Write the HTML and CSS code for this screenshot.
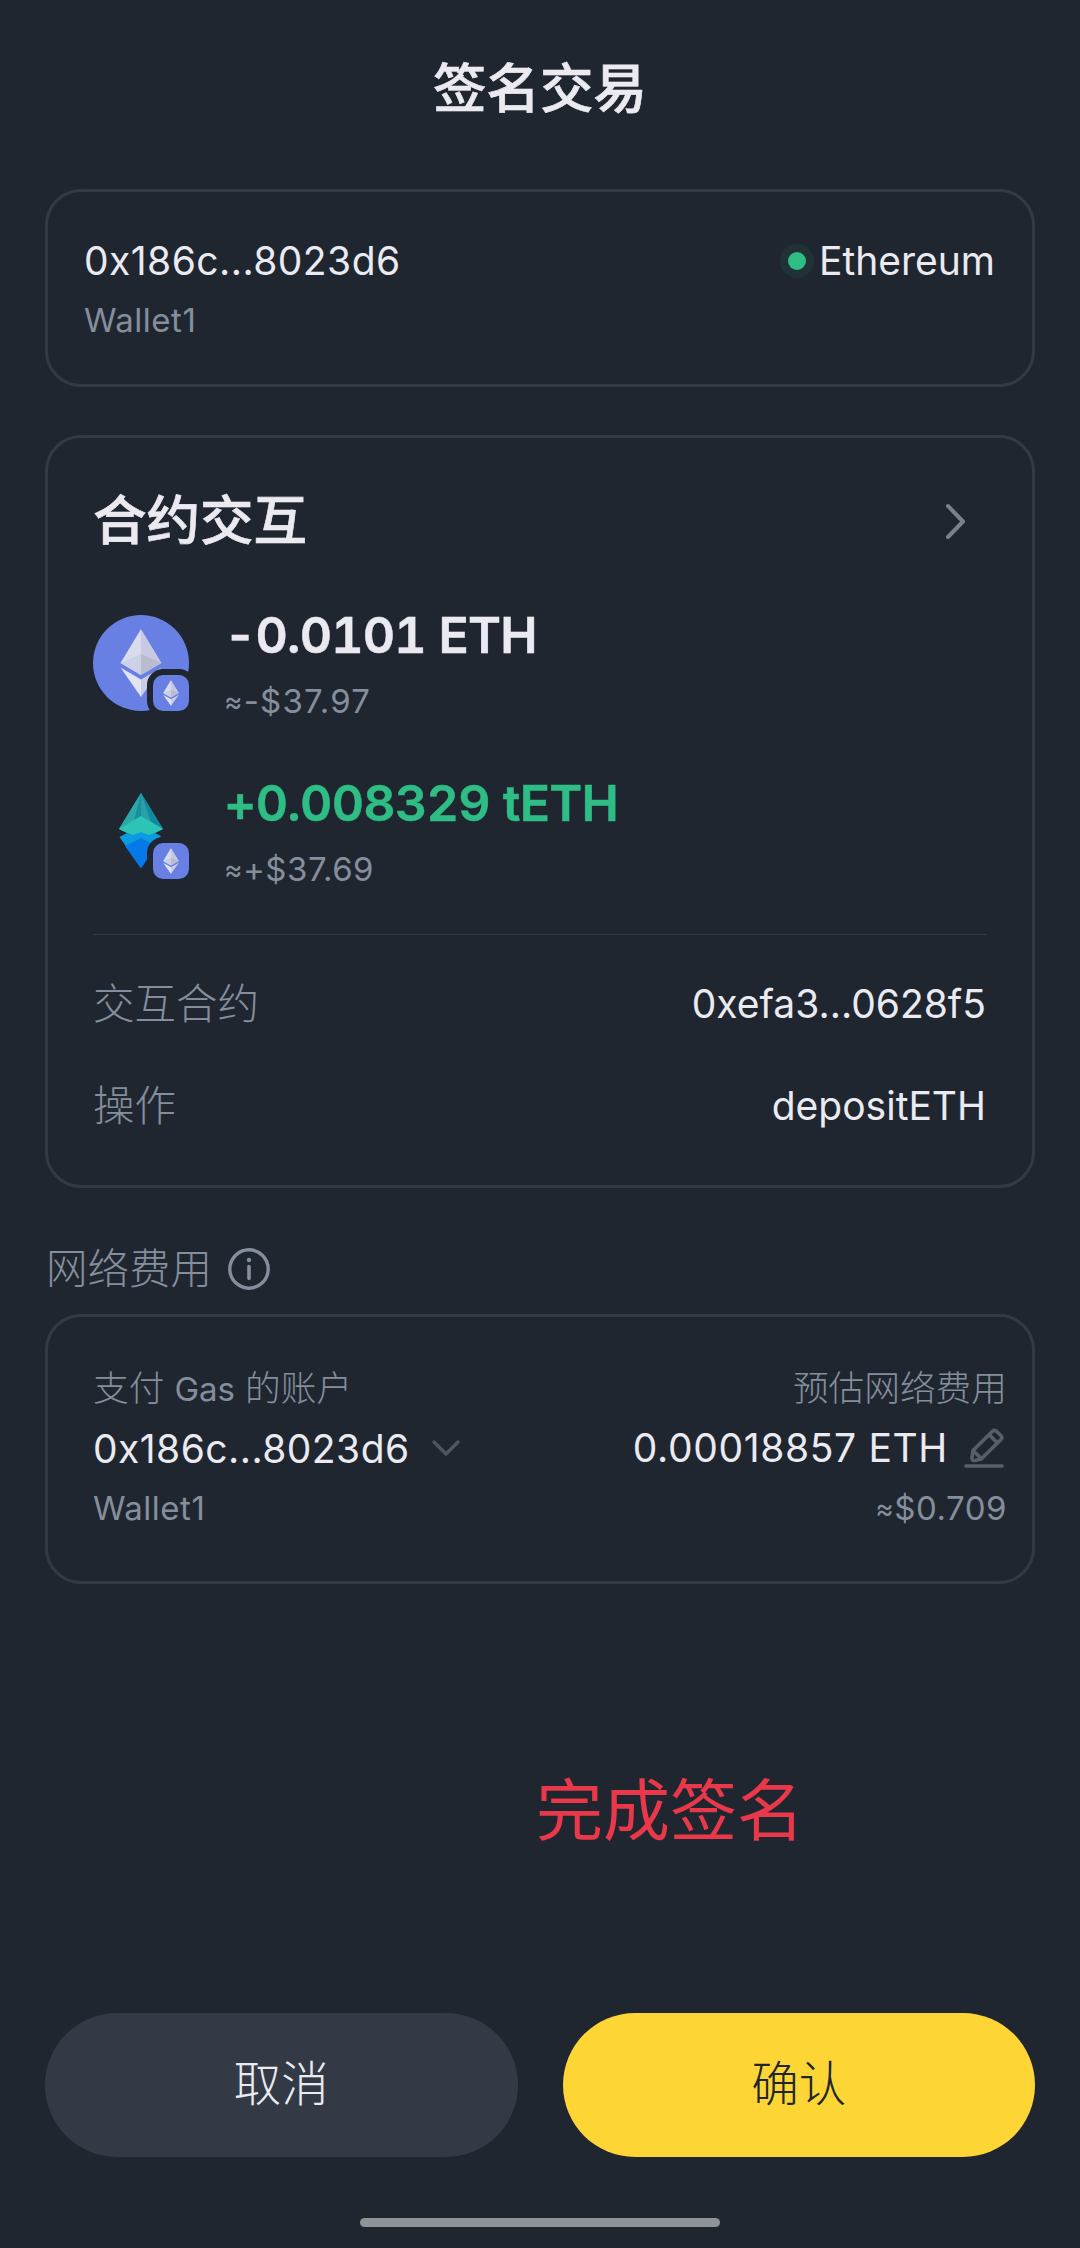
FILE: index.html
```html
<!DOCTYPE html>
<html lang="zh-CN">
<head>
  <meta charset="UTF-8" />
  <meta name="viewport" content="width=device-width, initial-scale=1.0"/>
  <title>签名交易</title>
  <link rel="stylesheet" href="styles.css">
</head>
<body>
  <!-- shared ethereum diamond -->
  <svg width="0" height="0" class="defs">
    <symbol id="eth" viewBox="0 0 42 68">
      <path d="M21 0L0.5 34L21 46Z" fill="#d9dcef"/>
      <path d="M21 0L41.5 34L21 46Z" fill="#c7cae2"/>
      <path d="M21 25L0.5 34L21 46Z" fill="#cdd1e8"/>
      <path d="M21 25L41.5 34L21 46Z" fill="#b9bccf"/>
      <path d="M0.5 38.5L21 50.5V68Z" fill="#e2e4f3"/>
      <path d="M41.5 38.5L21 50.5V68Z" fill="#c9cde6"/>
    </symbol>
  </svg>

  <h1 class="title">签名交易</h1>

  <div class="card account">
    <div class="row">
      <span class="address">0x186c...8023d6</span>
      <span class="network"><i class="dot"></i>Ethereum</span>
    </div>
    <div class="wallet">Wallet1</div>
  </div>

  <div class="card contract">
    <div class="row header">
      <h2>合约交互</h2>
      <svg class="arrow" width="24" height="40" viewBox="0 0 24 40">
        <path d="M4 5L19 20.5L4 36" fill="none" stroke="#7b818c" stroke-width="4" stroke-linecap="round" stroke-linejoin="round"/>
      </svg>
    </div>

    <div class="token">
      <div class="token-icon eth-icon">
        <svg width="42" height="68"><use href="#eth"/></svg>
        <span class="badge"><svg width="16" height="26"><use href="#eth"/></svg></span>
      </div>
      <div>
        <div class="amount minus">-0.0101 ETH</div>
        <div class="fiat loss"><span class="approx">≈</span>-$37.97</div>
      </div>
    </div>

    <div class="token">
      <div class="token-icon">
        <svg width="44" height="76" viewBox="0 0 44 76">
          <path d="M22 0L0 36L22 46L44 36Z" fill="#2aa9a8"/>
          <path d="M22 0L15 27L22 23L29 27Z" fill="#158f9f"/>
          <path d="M22 0L44 36L29 27Z" fill="#0f8aa2"/>
          <path d="M22 0L0 36L15 27Z" fill="#2ca6a6"/>
          <path d="M22 0L22 23L27 26L32 29Z" fill="#2b9fa6"/>
          <path d="M22 23L0 36L8 40L22 46L36 40L44 36Z" fill="#2bc4b5"/>
          <path d="M0.5 44L8 40L14 42L22 39L30 42L36 40L42 43L22 75Z" fill="#0a9be1"/>
          <path d="M6 53L22 45L37 53L22 75.5Z" fill="#0678e8"/>
        </svg>
        <span class="badge"><svg width="16" height="26"><use href="#eth"/></svg></span>
      </div>
      <div>
        <div class="amount plus">+0.008329 tETH</div>
        <div class="fiat"><span class="approx">≈</span>+$37.69</div>
      </div>
    </div>

    <hr />

    <div class="row detail">
      <span class="label">交互合约</span>
      <span>0xefa3...0628f5</span>
    </div>
    <div class="row detail">
      <span class="label">操作</span>
      <span>depositETH</span>
    </div>
  </div>

  <div class="fee-title">
    <span class="label">网络费用</span>
    <svg width="42" height="42" viewBox="0 0 42 42">
      <circle cx="21" cy="21" r="19.2" fill="none" stroke="#848e9c" stroke-width="3.4"/>
      <circle cx="21" cy="12" r="2.2" fill="#848e9c"/>
      <path d="M21 18.5V30.5" stroke="#848e9c" stroke-width="3.6" stroke-linecap="round"/>
    </svg>
  </div>

  <div class="card fee">
    <div>
      <div class="small">支付 <span class="latin">Gas</span> 的账户</div>
      <div class="value">
        <span class="address">0x186c...8023d6</span>
        <svg class="down" width="30" height="20" viewBox="0 0 30 20">
          <path d="M3 3L15 15L27 3" fill="none" stroke="#4f5662" stroke-width="3.4" stroke-linecap="round" stroke-linejoin="round"/>
        </svg>
      </div>
      <div class="wallet">Wallet1</div>
    </div>
    <div class="right">
      <div class="small">预估网络费用</div>
      <div class="value">
        <span class="gas">0.00018857 ETH</span>
        <svg class="edit" width="40" height="40" viewBox="0 0 40 40" fill="none" stroke="#575e69" stroke-width="3.6" stroke-linecap="round" stroke-linejoin="round">
          <path d="M9 22.5L28.5 3.2Q30.5 1.5 32.5 3.2L37 7.7Q38.8 9.5 37 11.5L17.5 30.8L11 32.5Q7.5 33 8 29.5Z"/>
          <path d="M25.5 7L33.5 15M9 22.5L17.5 30.8"/>
          <path d="M2 38H38"/>
        </svg>
      </div>
      <div class="fiat"><span class="approx">≈</span>$0.709</div>
    </div>
  </div>

  <div class="note">完成签名</div>

  <div class="buttons">
    <button class="cancel">取消</button>
    <button class="confirm">确认</button>
  </div>

  <div class="home-bar"></div>
</body>
</html>
```

FILE: styles.css
```css
* {
  box-sizing: border-box;
}

body {
  margin: 0;
  width: 1080px;
  height: 2248px;
  padding: 0 45px;
  overflow: hidden;
  display: flex;
  flex-direction: column;
  background: #202630;
  color: #eaeaf0;
  font-family: Inter, "Noto Sans CJK SC", sans-serif;
  font-size: 39px;
  line-height: 60px;
}

.defs {
  position: absolute;
}

h1,
h2 {
  margin: 0;
  font-size: 53.5px;
  font-weight: 500;
  line-height: 80px;
  -webkit-text-stroke: 0.7px #eaeaf0;
}

.title {
  margin-top: 49px;
  text-align: center;
}

.card {
  border: 3px solid #333a46;
  border-radius: 36px;
}

.row {
  display: flex;
  justify-content: space-between;
  align-items: center;
}

.account {
  height: 198px;
  margin-top: 60px;
  padding: 39px 37px 33px 36px;
}

.address {
  letter-spacing: 0.45px;
}

.network {
  display: flex;
  align-items: center;
}

.dot {
  width: 18px;
  height: 18px;
  margin-right: 13px;
  border-radius: 50%;
  background: #2ebd85;
  box-shadow: 0 0 0 8px rgba(46, 189, 133, 0.08);
}

.wallet,
.fiat {
  font-size: 33px;
  letter-spacing: 0.5px;
  color: #848e9c;
}

.wallet {
  margin-top: -1px;
}

.loss {
  letter-spacing: 1.2px;
}

.contract {
  height: 753px;
  margin-top: 48px;
  padding: 43px 45px 0;
}

.header {
  margin-bottom: 41px;
}

.arrow {
  margin-right: 19px;
}

.token {
  display: flex;
  height: 132px;
  margin-bottom: 36px;
}

.token-icon {
  position: relative;
  display: flex;
  align-items: center;
  justify-content: center;
  width: 96px;
  height: 96px;
  margin: 13px 35px 0 0;
  border-radius: 50%;
}

.eth-icon {
  background: #687fe3;
}

.badge {
  position: absolute;
  right: 0;
  bottom: 0;
  display: flex;
  align-items: center;
  justify-content: center;
  width: 36px;
  height: 36px;
  border-radius: 10px;
  background: #687fe3;
  box-shadow: 0 0 0 6px #202630;
}

.amount {
  font-size: 50px;
  font-weight: 600;
  font-variant-numeric: tabular-nums;
  line-height: 66px;
  -webkit-text-stroke: 0.5px currentColor;
}

.minus {
  letter-spacing: -0.8px;
}

.plus {
  letter-spacing: -0.7px;
  color: #2ebd85;
}

.token .fiat {
  line-height: 66px;
}

.approx {
  position: relative;
  top: -2px;
  font-size: 28px;
}

hr {
  height: 1px;
  margin: -4px 0 39px;
  border: none;
  background: #333a46;
}

.detail {
  margin-bottom: 42px;
  padding-right: 1px;
}

.label {
  font-size: 41.5px;
  font-weight: 300;
  color: #848e9c;
}

.fee-title {
  display: flex;
  align-items: center;
  gap: 16px;
  margin: 51px 0 15px 1px;
}

.fee {
  display: flex;
  justify-content: space-between;
  height: 270px;
  padding: 41px 25px 0 45px;
}

.small {
  font-size: 35.7px;
  font-weight: 300;
  color: #848e9c;
}

.latin {
  font-size: 33px;
  font-weight: 400;
}

.value {
  display: flex;
  align-items: center;
  justify-content: space-between;
}

.down {
  margin-right: auto;
  margin-left: 21px;
}

.right {
  text-align: right;
}

.gas {
  letter-spacing: 0.65px;
}

.edit {
  margin: 0 3px 0 16px;
}

.note {
  margin: 187px 0 0 491px;
  font-size: 67px;
  line-height: 80px;
  color: #e8384a;
}

.buttons {
  display: flex;
  gap: 45px;
  margin-top: 162px;
}

button {
  flex: 1;
  height: 144px;
  padding: 0 0 2px;
  border: none;
  border-radius: 72px;
  font-family: inherit;
  font-size: 47.5px;
  font-weight: 300;
  line-height: 60px;
}

.cancel {
  background: #333a46;
  color: #eaeaf0;
}

.confirm {
  background: #fdd535;
  color: #202630;
}

.home-bar {
  width: 360px;
  height: 9px;
  margin: 61px auto 0;
  border-radius: 5px;
  background: #8f9397;
}
```
